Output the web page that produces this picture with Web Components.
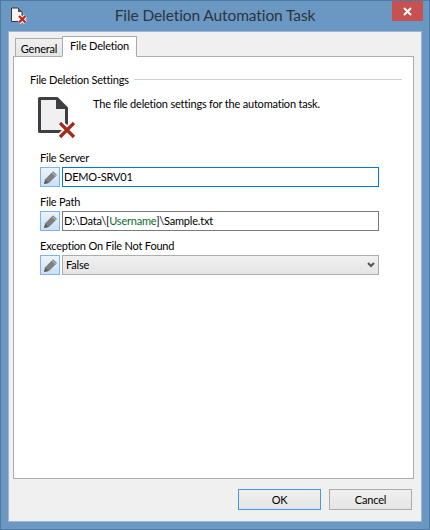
<!DOCTYPE html>
<html>
<head>
<meta charset="utf-8">
<title>File Deletion Automation Task</title>
<style>
    html, body{ margin: 0; padding: 0; background: #6b98c3; }
    body{ font-family: Lato, "Liberation Sans", sans-serif; font-size: 11px; letter-spacing: -0.2px; color: #000; }
</style>
</head>
<body>

<template id="pencil-tpl">
    <style>
        :host{ display: block; width: 20px; height: 20px; box-sizing: border-box; border: 1px solid #7eb4ea;
               background: linear-gradient(#ecf4fc, #c8e0f8); }
        svg{ display: block; }
    </style>
    <svg width="18" height="18" viewBox="0 0 18 18">
        <path d="M3 16 L4.2 11.2 L12 3.2 L16 7 L8 15 Z" fill="#808080"/>
        <path d="M3 16 L4.2 11.8 L7.4 15 Z" fill="#5a5a5a"/>
        <path d="M11 4.4 L14.8 8.2" stroke="#d6e6f6" stroke-width="0.8"/>
    </svg>
</template>

<script>
class WinDialog extends HTMLElement{
    constructor(){
        super();
        this.attachShadow({mode: 'open'});
        this.shadowRoot.innerHTML = `
            <style>
                :host{ display: flex; flex-direction: column; box-sizing: border-box; width: 430px; height: 530px;
                       border: 1px solid #4f7aa5; background: #6b98c3; }
                .bar{ display: grid; grid-template-columns: 1fr auto 1fr; height: 30px; flex: none; }
                .icon{ padding: 6px 0 0 9px; }
                .title{ font-size: 15.5px; letter-spacing: -0.1px; color: #2b3440; padding-top: 5px; white-space: nowrap; }
                .close-wrap{ display: flex; justify-content: flex-end; padding-right: 6px; }
                .close{ width: 31px; height: 20px; background: #c75050; display: flex; align-items: center; justify-content: center; }
                .client{ flex: 1; margin: 0 7px 7px 7px; background: #f0f0f0; border: 1px solid #9db7d2;
                         display: flex; flex-direction: column; }
            </style>
            <div class="bar">
                <div class="icon">
                    <svg width="17" height="17" viewBox="0 0 17 17" style="display:block">
                        <path d="M1.5 1 H8 L12 5 V14.5 H1.5 Z" fill="#f4f4f4" stroke="#333"/>
                        <path d="M8 1 V5 H12 Z" fill="#555"/>
                        <path d="M9 9 L15.5 15.5 M15.5 9 L9 15.5" stroke="#fff" stroke-width="4"/>
                        <path d="M9 9 L15.5 15.5 M15.5 9 L9 15.5" stroke="#c0281c" stroke-width="2.4"/>
                    </svg>
                </div>
                <div class="title"><slot name="title"></slot></div>
                <div class="close-wrap">
                    <div class="close">
                        <svg width="9" height="9" viewBox="0 0 9 9"><path d="M1 1 L8 8 M8 1 L1 8" stroke="#fff" stroke-width="2"/></svg>
                    </div>
                </div>
            </div>
            <div class="client"><slot></slot></div>
        `;
    }
}

class WinTabs extends HTMLElement{
    constructor(){
        super();
        this.attachShadow({mode: 'open'});
        this.shadowRoot.innerHTML = `
            <style>
                :host{ display: block; margin: 4px 7px 0 4px; }
                .strip{ display: flex; align-items: flex-end; padding-left: 2px; height: 21px; position: relative; z-index: 1; margin-bottom: -1px; }
                .tab{ box-sizing: border-box; height: 19px; width: 48px; border: 1px solid #acacac;
                      background: linear-gradient(#f0f0f0, #e5e5e5); text-align: center; line-height: 19px; }
                .tab.on{ height: 21px; width: 75px; margin-left: -1px; background: #fff; border-bottom-color: #fff; line-height: 18px; }
                .panel{ box-sizing: border-box; height: 423px; background: #fff; border: 1px solid #acacac; padding: 15px 10px 0 16px; }
            </style>
            <div class="strip">
                <div class="tab">General</div>
                <div class="tab on">File Deletion</div>
            </div>
            <div class="panel"><slot></slot></div>
        `;
    }
}

class WinSection extends HTMLElement{
    constructor(){
        super();
        this.attachShadow({mode: 'open'});
        this.shadowRoot.innerHTML = `
            <style>
                :host{ display: block; }
                .head{ display: flex; align-items: center; gap: 5px; height: 15px; }
                .head i{ flex: 1; height: 1px; background: #d0d0d0; margin-right: 1px; }
                .intro{ display: flex; gap: 14px; padding: 6px 0 0 7px; height: 50px; }
                .intro p{ margin: 4px 0 0; }
                svg{ display: block; flex: none; margin-top: 3px; }
            </style>
            <div class="head"><span><slot name="heading"></slot></span><i></i></div>
            <div class="intro">
                <svg width="42" height="46" viewBox="0 0 42 46">
                    <path d="M2.5 2.5 H20 L29.5 12 V35.5 H2.5 Z" fill="#f0f0f2" stroke="#3f3f41" stroke-width="3" stroke-linejoin="round"/>
                    <path d="M19 2 L30 12.5 V13 H19 Z" fill="#3f3f41"/>
                    <path d="M23 27 L37 41 M37 27 L23 41" stroke="#fff" stroke-width="7"/>
                    <path d="M23 27 L37 41 M37 27 L23 41" stroke="#a5281b" stroke-width="3.2"/>
                </svg>
                <p><slot name="intro"></slot></p>
            </div>
        `;
    }
}

class WinPencil extends HTMLElement{
    constructor(){
        super();
        this.attachShadow({mode: 'open'});
        this.shadowRoot.appendChild(document.getElementById('pencil-tpl').content.cloneNode(true));
    }
}

class WinField extends HTMLElement{
    constructor(){
        super();
        this.attachShadow({mode: 'open'});
        this.shadowRoot.innerHTML = `
            <style>
                :host{ display: block; margin-top: 6px; padding-left: 10px; }
                .label{ height: 14px; padding-top: 1px; line-height: 15px; margin-bottom: 3px; white-space: nowrap; }
                .row{ display: flex; gap: 2px; width: 339px; }
                .box{ flex: 1; box-sizing: border-box; height: 20px; border: 1px solid #7a7a7a; background: #fff;
                      line-height: 18px; padding-left: 1px; white-space: nowrap; overflow: hidden; position: relative; }
                :host([focused]) .box{ border-color: #0078d7; }
                :host([select]) .box{ border-color: #acacac; background: linear-gradient(#f0f0f0, #e5e5e5); padding-left: 3px; }
                svg.arrow{ display: none; position: absolute; right: 3px; top: 6px; }
                :host([select]) svg.arrow{ display: block; }
            </style>
            <div class="label"><slot name="label"></slot></div>
            <div class="row">
                <win-pencil></win-pencil>
                <div class="box">
                    <slot></slot>
                    <svg class="arrow" width="8" height="6" viewBox="0 0 8 6"><path d="M1 1 L4 4 L7 1" fill="none" stroke="#555" stroke-width="2"/></svg>
                </div>
            </div>
        `;
    }
}

class WinButton extends HTMLElement{
    constructor(){
        super();
        this.attachShadow({mode: 'open'});
        this.shadowRoot.innerHTML = `
            <style>
                :host{ display: block; box-sizing: border-box; width: 83px; height: 21px; border: 1px solid #acacac;
                       background: linear-gradient(#f0f0f0, #e5e5e5); text-align: center; line-height: 19px; }
                :host([primary]){ border-color: #3c9bf0; }
            </style>
            <slot></slot>
        `;
    }
}

class WinFooter extends HTMLElement{
    constructor(){
        super();
        this.attachShadow({mode: 'open'});
        this.shadowRoot.innerHTML = `
            <style>
                :host{ display: flex; justify-content: flex-end; gap: 8px; padding: 10px 9px 0 0; }
            </style>
            <slot></slot>
        `;
    }
}

customElements.define('win-pencil', WinPencil);
customElements.define('win-dialog', WinDialog);
customElements.define('win-tabs', WinTabs);
customElements.define('win-section', WinSection);
customElements.define('win-field', WinField);
customElements.define('win-button', WinButton);
customElements.define('win-footer', WinFooter);
</script>

<win-dialog>
    <span slot="title">File Deletion Automation Task</span>
    <win-tabs>
        <win-section>
            <span slot="heading">File Deletion Settings</span>
            <span slot="intro">The file deletion settings for the automation task.</span>
        </win-section>
        <win-field focused>
            <span slot="label">File Server</span>
            DEMO-SRV01
        </win-field>
        <win-field>
            <span slot="label">File Path</span>
            D:\Data\[<span style="color:#0a6b2a">Username</span>]\Sample.txt
        </win-field>
        <win-field select>
            <span slot="label">Exception On File Not Found</span>
            False
        </win-field>
    </win-tabs>
    <win-footer>
        <win-button primary>OK</win-button>
        <win-button>Cancel</win-button>
    </win-footer>
</win-dialog>

</body>
</html>
